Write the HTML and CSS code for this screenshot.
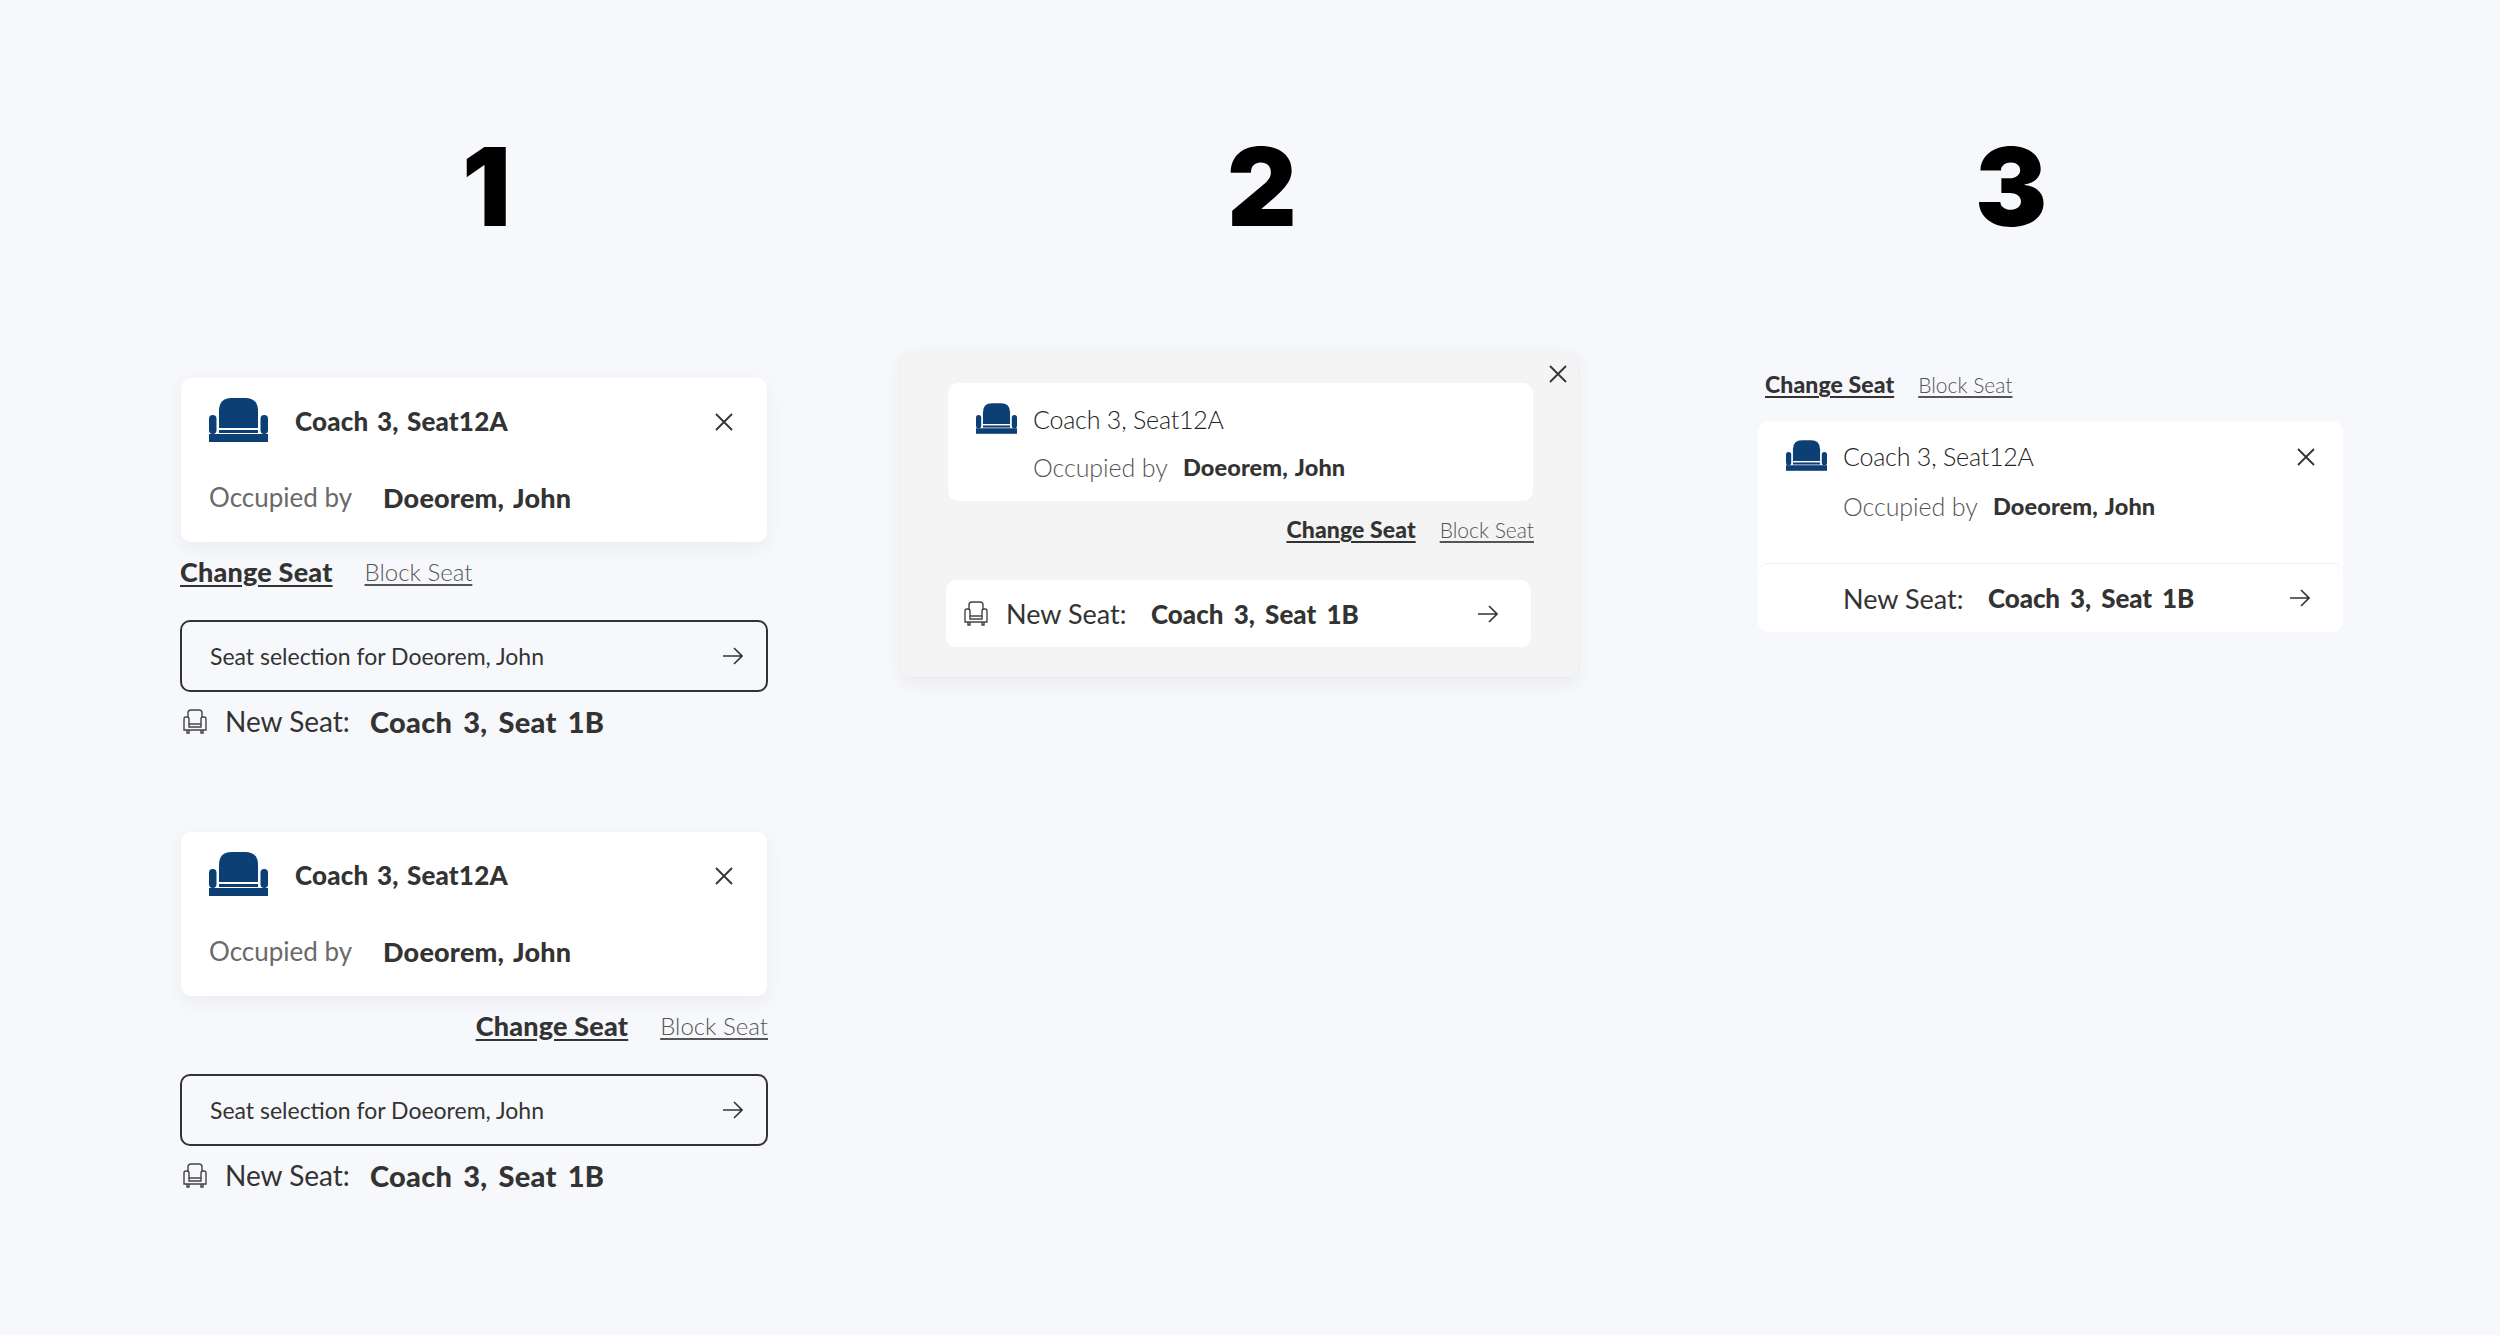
FILE: index.html
```html
<!DOCTYPE html>
<html>
<head>
    <link rel="stylesheet" href="styles.css">
</head>
<body>
    <svg class="defs" width="0" height="0">
        <symbol id="seat-solid" viewBox="0 0 59 44">
            <rect x="0" y="17" width="7.5" height="19" rx="3.7"/>
            <rect x="51.5" y="17" width="7.5" height="19" rx="3.7"/>
            <path d="M10 30V13Q10 0 23 0H36Q49 0 49 13V30Z"/>
            <rect x="10" y="32" width="39" height="3"/>
            <rect x="0" y="36" width="59" height="8"/>
        </symbol>
        <symbol id="seat-line" viewBox="0 0 24 25">
            <path d="M5 9V4Q5 1 8 1H16Q19 1 19 4V9"/>
            <path d="M1 10Q1 8 3 8H4Q6 8 6 10V15H18V10Q18 8 20 8H21Q23 8 23 10V21H1Z"/>
            <path d="M6 15V18H18V15"/>
            <path d="M4 21V24H6V21M18 21V24H20V21"/>
        </symbol>
        <symbol id="close" viewBox="0 0 18 18">
            <path d="M1 1L17 17M17 1L1 17"/>
        </symbol>
        <symbol id="arrow" viewBox="0 0 20 18">
            <path d="M0 9H19M11 1L19 9L11 17"/>
        </symbol>
    </svg>

    <main class="board">
        <section class="col col-one">
            <div class="num">1</div>

            <div class="option">
                <div class="card">
                    <div class="row">
                        <svg class="seat"><use href="#seat-solid"/></svg>
                        <b class="coach">Coach 3, Seat12A</b>
                        <svg class="x"><use href="#close"/></svg>
                    </div>
                    <div class="row occ">
                        <span class="occ-label">Occupied by</span>
                        <b class="occ-name">Doeorem, John</b>
                    </div>
                </div>
                <div class="links">
                    <a class="link-main">Change Seat</a>
                    <a class="link-sub">Block Seat</a>
                </div>
                <div class="picker">
                    <span>Seat selection for Doeorem, John</span>
                    <svg class="arr"><use href="#arrow"/></svg>
                </div>
                <div class="new-seat">
                    <svg class="seat-sm"><use href="#seat-line"/></svg>
                    <span class="new-label">New Seat:</span>
                    <b class="new-value">Coach 3, Seat 1B</b>
                </div>
            </div>

            <div class="option">
                <div class="card">
                    <div class="row">
                        <svg class="seat"><use href="#seat-solid"/></svg>
                        <b class="coach">Coach 3, Seat12A</b>
                        <svg class="x"><use href="#close"/></svg>
                    </div>
                    <div class="row occ">
                        <span class="occ-label">Occupied by</span>
                        <b class="occ-name">Doeorem, John</b>
                    </div>
                </div>
                <div class="links links-right">
                    <a class="link-main">Change Seat</a>
                    <a class="link-sub">Block Seat</a>
                </div>
                <div class="picker">
                    <span>Seat selection for Doeorem, John</span>
                    <svg class="arr"><use href="#arrow"/></svg>
                </div>
                <div class="new-seat">
                    <svg class="seat-sm"><use href="#seat-line"/></svg>
                    <span class="new-label">New Seat:</span>
                    <b class="new-value">Coach 3, Seat 1B</b>
                </div>
            </div>
        </section>

        <section class="col col-two">
            <div class="num">2</div>

            <div class="panel">
                <svg class="x panel-x"><use href="#close"/></svg>
                <div class="small-card">
                    <div class="small-top">
                        <svg class="seat-md"><use href="#seat-solid"/></svg>
                        <span class="coach-light">Coach 3, Seat12A</span>
                    </div>
                    <div class="small-occ">
                        <span class="occ-light">Occupied by</span>
                        <b class="occ-small">Doeorem, John</b>
                    </div>
                </div>
                <div class="links links-small links-right">
                    <a class="link-main">Change Seat</a>
                    <a class="link-sub">Block Seat</a>
                </div>
                <div class="new-card">
                    <svg class="seat-sm"><use href="#seat-line"/></svg>
                    <span class="new-label">New Seat:</span>
                    <b class="new-value">Coach 3, Seat 1B</b>
                    <svg class="arr"><use href="#arrow"/></svg>
                </div>
            </div>
        </section>

        <section class="col col-three">
            <div class="num">3</div>

            <div class="links links-small links-top">
                <a class="link-main">Change Seat</a>
                <a class="link-sub">Block Seat</a>
            </div>
            <div class="stack">
                <div class="stack-top">
                    <div class="small-top">
                        <svg class="seat-md"><use href="#seat-solid"/></svg>
                        <span class="coach-light">Coach 3, Seat12A</span>
                        <svg class="x"><use href="#close"/></svg>
                    </div>
                    <div class="small-occ">
                        <span class="occ-light">Occupied by</span>
                        <b class="occ-small">Doeorem, John</b>
                    </div>
                </div>
                <div class="stack-bottom">
                    <span class="new-label">New Seat:</span>
                    <b class="new-value">Coach 3, Seat 1B</b>
                    <svg class="arr"><use href="#arrow"/></svg>
                </div>
            </div>
        </section>
    </main>
</body>
</html>
```

FILE: styles.css
```css
html, body {
    margin: 0;
    height: 100%;
}
body {
    background-color: #f7f8fb;
    color: #333;
    font-family: 'Lato', sans-serif;
    overflow: hidden;
}
.defs {
    display: block;
    height: 0;
}
svg {
    display: block;
    flex: none;
}
.board {
    display: flex;
    align-items: flex-start;
    padding-left: 180px;
}
.col {
    flex: none;
}
.col-one {
    width: 588px;
}
.col-two {
    width: 677px;
    margin-left: 133px;
}
.col-three {
    width: 587px;
    margin-left: 180px;
}
.num {
    height: 240px;
    padding-top: 126px;
    box-sizing: border-box;
    font-family: 'Inter', sans-serif;
    font-weight: 900;
    font-size: 108px;
    line-height: 122px;
    color: #000;
}
.col-one .num {
    padding-left: 282px;
}
.col-two .num {
    padding-left: 326px;
}
.col-three .num {
    padding-left: 217px;
}

.option {
    margin-top: 138px;
    height: 360px;
}
.option + .option {
    margin-top: 94px;
}
.card {
    width: 586px;
    height: 164px;
    margin-left: 1px;
    box-sizing: border-box;
    padding: 20px 34px 20px 28px;
    background: #fff;
    border-radius: 10px;
    box-shadow: 0 6px 18px rgba(40, 50, 80, 0.06);
}
.row {
    display: flex;
    align-items: center;
    height: 48px;
}
.occ {
    margin-top: 27px;
}
.seat {
    width: 59px;
    height: 44px;
    margin-bottom: 4px;
    fill: #0c3f74;
}
.coach {
    margin-left: 27px;
    margin-right: auto;
    margin-bottom: 2px;
    font-size: 26px;
    font-weight: 900;
    letter-spacing: 0.2px;
    word-spacing: 2px;
}
.x {
    width: 18px;
    height: 18px;
    fill: none;
    stroke: #333;
    stroke-width: 1.8;
}
.occ-label {
    width: 174px;
    font-size: 26px;
    font-weight: 400;
    color: #6a6a6a;
}
.occ-name {
    font-size: 27px;
    font-weight: 900;
    letter-spacing: 0.2px;
    word-spacing: 3px;
}

.links {
    display: flex;
    gap: 32px;
    height: 30px;
    margin-top: 14px;
    align-items: center;
    font-size: 27px;
}
.links-right {
    justify-content: flex-end;
}
.link-main {
    font-weight: 900;
    letter-spacing: 0.2px;
    text-decoration: underline;
    text-underline-offset: 3px;
}
.link-sub {
    font-weight: 300;
    font-size: 24px;
    color: #555;
    text-decoration: underline;
    text-underline-offset: 3px;
}

.picker {
    display: flex;
    align-items: center;
    justify-content: space-between;
    height: 72px;
    margin-top: 34px;
    padding: 0 23px 0 28px;
    box-sizing: border-box;
    border: 2px solid #333;
    border-radius: 10px;
    font-size: 23px;
    font-weight: 400;
}
.arr {
    width: 20px;
    height: 18px;
    fill: none;
    stroke: #333;
    stroke-width: 1.6;
}
.new-seat {
    display: flex;
    align-items: center;
    height: 40px;
    margin-top: 9px;
    padding-left: 3px;
}
.seat-sm {
    width: 24px;
    height: 25px;
    fill: none;
    stroke: #444;
    stroke-width: 1.4;
}
.new-label {
    margin-left: 18px;
    width: 145px;
    font-size: 28px;
    font-weight: 400;
}
.new-value {
    font-size: 29px;
    font-weight: 900;
    letter-spacing: 0.25px;
    word-spacing: 4px;
}

.panel {
    position: relative;
    height: 325px;
    margin-top: 112px;
    padding: 31px 45px 0 47px;
    box-sizing: border-box;
    background: #f4f4f4;
    border-radius: 10px;
    box-shadow: 0 0 0 1px rgba(0, 0, 0, 0.01), 0 6px 18px rgba(40, 50, 80, 0.07);
}
.panel-x {
    position: absolute;
    top: 13px;
    right: 11px;
}
.small-card {
    height: 118px;
    padding: 20px 28px;
    box-sizing: border-box;
    background: #fff;
    border-radius: 10px;
}
.small-top {
    display: flex;
    align-items: center;
    height: 34px;
}
.seat-md {
    width: 41px;
    height: 31px;
    margin-bottom: 3px;
    fill: #0c3f74;
}
.coach-light {
    margin-left: 16px;
    margin-right: auto;
    margin-bottom: 2px;
    font-size: 25px;
    font-weight: 300;
    color: #222;
    letter-spacing: -0.2px;
}
.small-occ {
    display: flex;
    align-items: center;
    height: 34px;
    margin-top: 13px;
    padding-left: 57px;
}
.occ-light {
    width: 150px;
    font-size: 25px;
    font-weight: 300;
    color: #555;
    letter-spacing: -0.1px;
}
.occ-small {
    font-size: 23.5px;
    font-weight: 900;
    letter-spacing: 0.1px;
    word-spacing: 2px;
}
.links-small {
    font-size: 23px;
    gap: 24px;
}
.links-small .link-main {
    letter-spacing: 0.1px;
}
.links-small .link-sub {
    font-size: 21px;
}
.col-two .links-small {
    margin-top: 13px;
    margin-right: -1px;
}
.new-card {
    display: flex;
    align-items: center;
    height: 67px;
    margin: 36px 2px 0 -2px;
    padding: 0 33px 0 18px;
    box-sizing: border-box;
    background: #fff;
    border-radius: 10px;
}
.new-card .new-value {
    margin-right: auto;
    font-size: 26px;
    letter-spacing: 0;
}
.new-card .new-label {
    font-size: 27px;
}

.links-top {
    margin-top: 129px;
    padding-left: 7px;
}
.stack {
    margin-top: 22px;
    width: 585px;
}
.stack-top {
    height: 150px;
    padding: 19px 28px 0 28px;
    box-sizing: border-box;
    background: #fff;
    border-radius: 10px 10px 0 0;
}
.stack .small-occ {
    margin-top: 15px;
}
.stack-bottom {
    display: flex;
    align-items: center;
    height: 69px;
    margin-top: -8px;
    position: relative;
    padding: 0 33px 0 85px;
    box-sizing: border-box;
    background: #fff;
    border-top: 1px solid #eeeff1;
    border-radius: 10px;
}
.stack-bottom .new-label {
    margin-left: 0;
    font-size: 27px;
}
.stack-bottom .new-value {
    margin-right: auto;
    font-size: 26px;
    letter-spacing: -0.1px;
}
```
